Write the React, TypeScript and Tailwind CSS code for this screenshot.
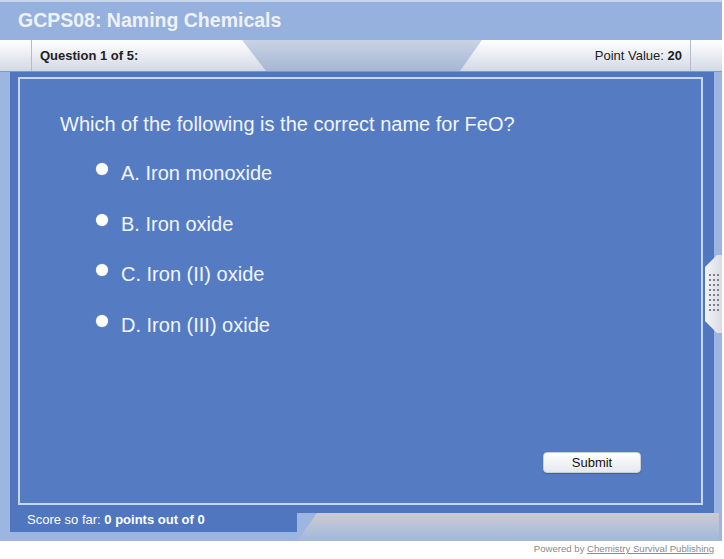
const options = [
  "A. Iron monoxide",
  "B. Iron oxide",
  "C. Iron (II) oxide",
  "D. Iron (III) oxide",
];

function Handle() {
  return (
    <div className="absolute right-0 top-[255px] w-[17px] h-[78px] bg-gradient-to-r from-[#f2f3f5] to-[#d9dde4] [clip-path:polygon(0_12px,12px_0,100%_0,100%_100%,12px_100%,0_calc(100%-12px))] flex items-center justify-center">
      <div className="grid grid-cols-3 gap-x-[2px] gap-y-[3px] mt-[-4px]">
        {Array.from({ length: 24 }).map((_, i) => (
          <div key={i} className="w-[2px] h-[2px] bg-[#7a8090]" />
        ))}
      </div>
    </div>
  );
}

export default function App() {
  return (
    <div className="w-[724px] h-[559px] bg-white font-['Liberation_Sans',Arial,sans-serif]">
      <div className="relative w-[722px] h-[541px] bg-[#9cb5e1] flex flex-col">
        {/* title bar */}
        <div className="h-[40px] shrink-0 bg-[#96b1dd] border-t-2 border-[#c6d4ec] flex items-center pl-[18px]">
          <h1 className="text-[19.5px] font-bold text-[#eef2fa] leading-none mt-[-1px]">
            GCPS08: Naming Chemicals
          </h1>
        </div>

        {/* question tab bar */}
        <div className="h-[32px] shrink-0 flex justify-between bg-gradient-to-b from-[#c9d3e5] to-[#a6b7d4] border-b border-[#7f98c4] text-[13px] text-[#222]">
          <div className="w-[266px] flex bg-gradient-to-b from-white to-[#d3d9e4] [clip-path:polygon(0_0,242px_0,100%_100%,0_100%)]">
            <div className="w-[32px] border-r border-[#b4bccb]" />
            <div className="pl-[8px] flex items-center font-bold">Question 1 of 5:</div>
          </div>
          <div className="w-[262px] flex justify-end bg-gradient-to-b from-white to-[#d3d9e4] [clip-path:polygon(22px_0,100%_0,100%_100%,0_100%)]">
            <div className="pr-[8px] flex items-center">
              Point Value:&nbsp;<span className="font-bold">20</span>
            </div>
            <div className="w-[32px] border-l border-[#b4bccb]" />
          </div>
        </div>

        {/* main panel */}
        <div className="flex-1 flex flex-col pl-[10px] pr-[8px]">
          <div className="flex-1 bg-[#4f76be] pl-[8px] pr-[11px] pt-[5px] pb-[2px] flex">
            <div className="flex-1 bg-[#557cc3] border-2 border-[#c9d6ef] flex flex-col pl-[40px] pr-[60px] pt-[34px] pb-[30px] text-[#f2f5fc]">
              <p className="text-[20px] leading-[23px]">
                Which of the following is the correct name for FeO?
              </p>
              <ul className="mt-[26px] pl-[36px] flex flex-col gap-[27.5px]">
                {options.map((o) => (
                  <li key={o} className="flex items-center gap-[13px] text-[20px] leading-[23px]">
                    <span className="w-[12px] h-[12px] rounded-full bg-white mt-[-9px] shadow-[0_0_1px_#c0c8d8]" />
                    {o}
                  </li>
                ))}
              </ul>
              <div className="flex-1" />
              <div className="flex justify-end">
                <button className="w-[98px] h-[21px] rounded-[4px] border border-[#c9cfd8] bg-gradient-to-b from-white to-[#e6e8ec] text-[13px] text-[#111] shadow-[0_1px_1px_rgba(0,0,0,0.25)]">
                  Submit
                </button>
              </div>
            </div>
          </div>

          {/* score row */}
          <div className="h-[34px] shrink-0 flex">
            <div className="w-[287px] flex flex-col">
              <div className="h-[25px] bg-[#4f76be] pl-[17px] flex items-center text-[13px] text-white">
                Score so far:&nbsp;<span className="font-bold">0 points out of 0</span>
              </div>
            </div>
            <div className="flex-1 flex flex-col">
              <div className="h-[6px] bg-[#4f76be]" />
              <div className="flex-1 mr-[-5px] bg-gradient-to-b from-[#cbccd4] to-[#a2b7dc] [clip-path:polygon(20px_0,100%_0,100%_100%,0_100%)]" />
            </div>
          </div>
        </div>

        <Handle />
      </div>

      <div className="w-[722px] flex justify-end pr-[8px] pt-[1px] text-[9.6px] text-[#8a8a8a] leading-[14px]">
        Powered by&nbsp;<span className="underline">Chemistry Survival Publishing</span>
      </div>
    </div>
  );
}
